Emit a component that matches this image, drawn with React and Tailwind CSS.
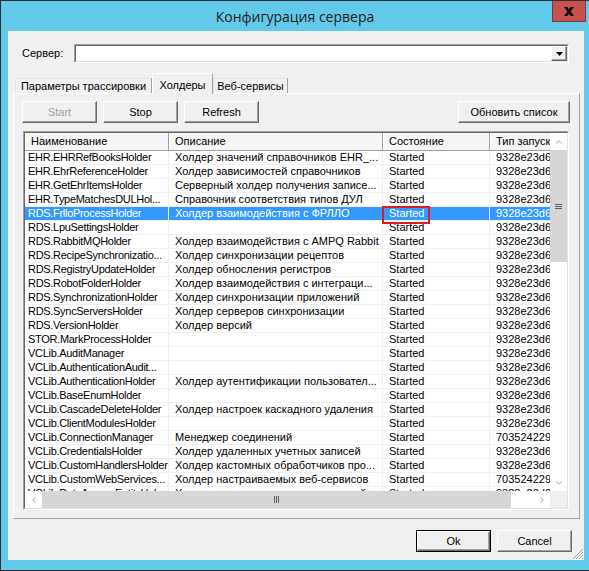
import { ChevronUp, ChevronDown, ChevronLeft, ChevronRight } from 'lucide-react';

const G1 = '9328e23d60b14c0e';
const G2 = '7035242290a1f77c';

const rows = [
  ['EHR.EHRRefBooksHolder', 'Холдер значений справочников EHR_...', G1],
  ['EHR.EhrReferenceHolder', 'Холдер зависимостей справочников', G1],
  ['EHR.GetEhrItemsHolder', 'Серверный холдер получения записе...', G1],
  ['EHR.TypeMatchesDULHol...', 'Справочник соответствия типов ДУЛ', G1],
  ['RDS.FrlloProcessHolder', 'Холдер взаимодействия с ФРЛЛО', G1],
  ['RDS.LpuSettingsHolder', '', G1],
  ['RDS.RabbitMQHolder', 'Холдер взаимодействия с AMPQ Rabbit', G1],
  ['RDS.RecipeSynchronizatio...', 'Холдер синхронизации рецептов', G1],
  ['RDS.RegistryUpdateHolder', 'Холдер обносления регистров', G1],
  ['RDS.RobotFolderHolder', 'Холдер взаимодействия с интеграци...', G1],
  ['RDS.SynchronizationHolder', 'Холдер синхронизации приложений', G1],
  ['RDS.SyncServersHolder', 'Холдер серверов синхронизации', G1],
  ['RDS.VersionHolder', 'Холдер версий', G1],
  ['STOR.MarkProcessHolder', '', G1],
  ['VCLib.AuditManager', '', G1],
  ['VCLib.AuthenticationAudit...', '', G1],
  ['VCLib.AuthenticationHolder', 'Холдер аутентификации пользовател...', G1],
  ['VCLib.BaseEnumHolder', '', G1],
  ['VCLib.CascadeDeleteHolder', 'Холдер настроек каскадного удаления', G1],
  ['VCLib.ClientModulesHolder', '', G1],
  ['VCLib.ConnectionManager', 'Менеджер соединений', G2],
  ['VCLib.CredentialsHolder', 'Холдер удаленных учетных записей', G1],
  ['VCLib.CustomHandlersHolder', 'Холдер кастомных обработчиков про...', G1],
  ['VCLib.CustomWebServices...', 'Холдер настраиваемых веб-сервисов', G2],
  ['VCLib.DataAccessEntityHol...', 'Холдер доступа к данным сущностей', G1],
];

const SELECTED = 4;

// classic raised 3d button
function WinButton({ children, width, disabled, isDefault }) {
  const face = (
    <div
      className={`flex h-full w-full items-center justify-center border-t border-l border-t-white border-l-white border-r border-b border-r-[#696969] border-b-[#696969] bg-[#f0f0f0] shadow-[inset_-1px_-1px_0_#a0a0a0] ${
        disabled ? 'text-[#a0a0a0]' : 'text-black'
      }`}
    >
      {children}
    </div>
  );
  if (isDefault) {
    return (
      <div className="h-[22px] shrink-0 border border-black" style={{ width }}>
        {face}
      </div>
    );
  }
  return (
    <div className="h-[22px] shrink-0" style={{ width }}>
      {face}
    </div>
  );
}

function Tab({ label, active, width }) {
  if (active) {
    return (
      <div
        className="relative z-10 -mb-px flex h-[21px] shrink-0 items-start justify-center border-t border-l border-t-white border-l-white border-r border-r-[#a0a0a0] bg-[#f0f0f0] pt-[3px]"
        style={{ width }}
      >
        {label}
      </div>
    );
  }
  return (
    <div
      className="flex h-[15px] shrink-0 items-center justify-center border-t border-l border-t-[#e3e3e3] border-l-[#e3e3e3] border-r border-r-[#a0a0a0] bg-[#f0f0f0] leading-[14px]"
      style={{ width }}
    >
      {label}
    </div>
  );
}

function Row({ r, selected }) {
  const base = 'shrink-0 overflow-hidden whitespace-nowrap border-r border-b border-[#f0f0f0]';
  return (
    <div className={`flex h-[14px] leading-[13px] ${selected ? 'bg-[#3399ff] text-white' : 'text-black'}`}>
      <div className={`${base} w-[144px] pl-[3px] tracking-[-0.3px]`}>{r[0]}</div>
      <div className={`${base} w-[214px] pl-[6px]`}>{r[1]}</div>
      <div className={`${base} w-[107px] pl-[6px]`}>Started</div>
      <div className={`${base} w-[110px] pl-[6px]`}>{r[2]}</div>
    </div>
  );
}

function HeaderCell({ label, width }) {
  return (
    <div
      className="flex h-full shrink-0 items-center border-l border-l-white border-r border-r-[#a0a0a0] pl-[5px] pb-px whitespace-nowrap overflow-hidden"
      style={{ width }}
    >
      {label}
    </div>
  );
}

function ListView() {
  return (
    <div className="relative ml-px h-[379px] w-[546px] border-t border-l border-t-[#a0a0a0] border-l-[#a0a0a0] border-r border-b border-r-white border-b-white">
      <div className="flex h-full w-full flex-col border-t border-l border-t-[#696969] border-l-[#696969] border-r border-b border-r-[#e3e3e3] border-b-[#e3e3e3] bg-white">
        <div className="flex min-h-0 flex-1">
          <div className="flex min-w-0 flex-1 flex-col overflow-hidden">
            <div className="flex h-[18px] shrink-0 border-b border-[#a0a0a0] bg-[#f5f5f5] text-black">
              <HeaderCell label="Наименование" width={144} />
              <HeaderCell label="Описание" width={214} />
              <HeaderCell label="Состояние" width={107} />
              <HeaderCell label="Тип запуска" width={110} />
            </div>
            {rows.map((r, i) => (
              <Row key={r[0]} r={r} selected={i === SELECTED} />
            ))}
          </div>
          {/* vertical scrollbar */}
          <div className="flex w-[17px] shrink-0 flex-col bg-[#f7f7f7]">
            <div className="flex h-[17px] items-center justify-center bg-white">
              <ChevronUp size={10} strokeWidth={1.4} color="#606060" />
            </div>
            <div className="flex h-[112px] items-center justify-center bg-[#d6d6d6]">
              <div className="flex w-[7px] flex-col gap-[1px]">
                <div className="h-px bg-[#606060]" />
                <div className="h-px bg-[#606060]" />
                <div className="h-px bg-[#606060]" />
              </div>
            </div>
            <div className="flex-1 bg-white" />
            <div className="flex h-[17px] items-center justify-center bg-white">
              <ChevronDown size={10} strokeWidth={1.4} color="#606060" />
            </div>
          </div>
        </div>
        {/* horizontal scrollbar */}
        <div className="flex h-[17px] shrink-0">
          <div className="flex w-[17px] items-center justify-center bg-white">
            <ChevronLeft size={10} strokeWidth={1.4} color="#606060" />
          </div>
          <div className="flex w-[469px] items-center justify-center bg-[#d6d6d6]">
            <div className="flex h-[7px] gap-[1px]">
              <div className="w-px bg-[#606060]" />
              <div className="w-px bg-[#606060]" />
              <div className="w-px bg-[#606060]" />
            </div>
          </div>
          <div className="flex-1 bg-white" />
          <div className="flex w-[17px] items-center justify-center bg-white">
            <ChevronRight size={10} strokeWidth={1.4} color="#606060" />
          </div>
          <div className="w-[17px] bg-[#f0f0f0]" />
        </div>
      </div>
      {/* highlight frame drawn over the state cell */}
      <div className="pointer-events-none absolute left-[358px] top-[74px] h-[18px] w-[48px] border-2 border-[#e01b1b]" />
    </div>
  );
}

export default function App() {
  return (
    <div className="flex h-[571px] w-[589px] flex-col border-t border-l border-b border-[#2f2f2f] bg-[#63c9ea] font-['Liberation_Sans',Arial,sans-serif] text-[11px] text-black">
      {/* title bar */}
      <div className="relative flex h-[30px] shrink-0 items-center justify-center">
        <span className="font-['Open_Sans','Noto_Sans',sans-serif] text-[14px] text-[#1d1d1d]">
          Конфигурация сервера
        </span>
        <div className="absolute right-[3px] top-0 flex h-[21px] w-[34px] items-center justify-center border border-t-0 border-[#7d3a3a] bg-[#c75050]">
          <svg width="10" height="9" viewBox="0 0 10 9">
            <path d="M0 0h3.4l1.6 2.3 1.6-2.3h3.4l-3.3 4.5 3.3 4.5h-3.4l-1.6-2.3-1.6 2.3h-3.4l3.3-4.5z" fill="#111" />
          </svg>
        </div>
      </div>

      {/* client area */}
      <div className="relative ml-[7px] mr-[5px] h-[529px] shrink-0 bg-[#f0f0f0]">
        <div className="flex items-center pt-[13px]">
          <span className="ml-[14px] w-[52px]">Сервер:</span>
          <div className="flex h-[19px] w-[495px] border-t border-l border-t-[#a0a0a0] border-l-[#a0a0a0] border-r border-b border-r-white border-b-white">
            <div className="flex h-full w-full justify-end border-t border-l border-t-[#696969] border-l-[#696969] border-r border-b border-r-[#e3e3e3] border-b-[#e3e3e3] bg-white">
              <div className="flex h-full w-[16px] items-center justify-center border-t border-l border-t-white border-l-white border-r border-b border-r-[#696969] border-b-[#696969] bg-[#f0f0f0] shadow-[inset_-1px_-1px_0_#a0a0a0]">
                <svg width="7" height="4" viewBox="0 0 7 4">
                  <path d="M0 0h7l-3.5 4z" fill="#000" />
                </svg>
              </div>
            </div>
          </div>
        </div>

        {/* tabs */}
        <div className="ml-[7px] mt-[10px] flex items-end">
          <Tab label="Параметры трассировки" width={137} />
          <Tab label="Холдеры" active width={61} />
          <Tab label="Веб-сервисы" width={75} />
        </div>
        <div className="ml-[5px] h-[426px] w-[567px] border-t border-l border-t-white border-l-white border-r border-b border-r-[#a0a0a0] border-b-[#a0a0a0] pl-[8px] pt-[7px]">
          <div className="flex gap-[6px]">
            <WinButton width={75} disabled>Start</WinButton>
            <WinButton width={75}>Stop</WinButton>
            <WinButton width={75}>Refresh</WinButton>
            <div className="ml-auto mr-[9px]">
              <WinButton width={112}>Обновить список</WinButton>
            </div>
          </div>
          <div className="mt-[8px]">
            <ListView />
          </div>
        </div>

        <div className="mr-[12px] mt-[11px] flex justify-end gap-[6px]">
          <WinButton width={75} isDefault>Ok</WinButton>
          <WinButton width={75}>Cancel</WinButton>
        </div>

        {/* size grip */}
        <svg className="absolute bottom-0 right-0" width="12" height="12" viewBox="0 0 12 12">
          <path d="M11 1L1 11M11 4L4 11M11 7L7 11M11 10L10 11" stroke="#a0a0a0" strokeWidth="1" />
          <path d="M12 2L2 12M12 5L5 12M12 8L8 12" stroke="#ffffff" strokeWidth="1" />
        </svg>
      </div>
    </div>
  );
}
